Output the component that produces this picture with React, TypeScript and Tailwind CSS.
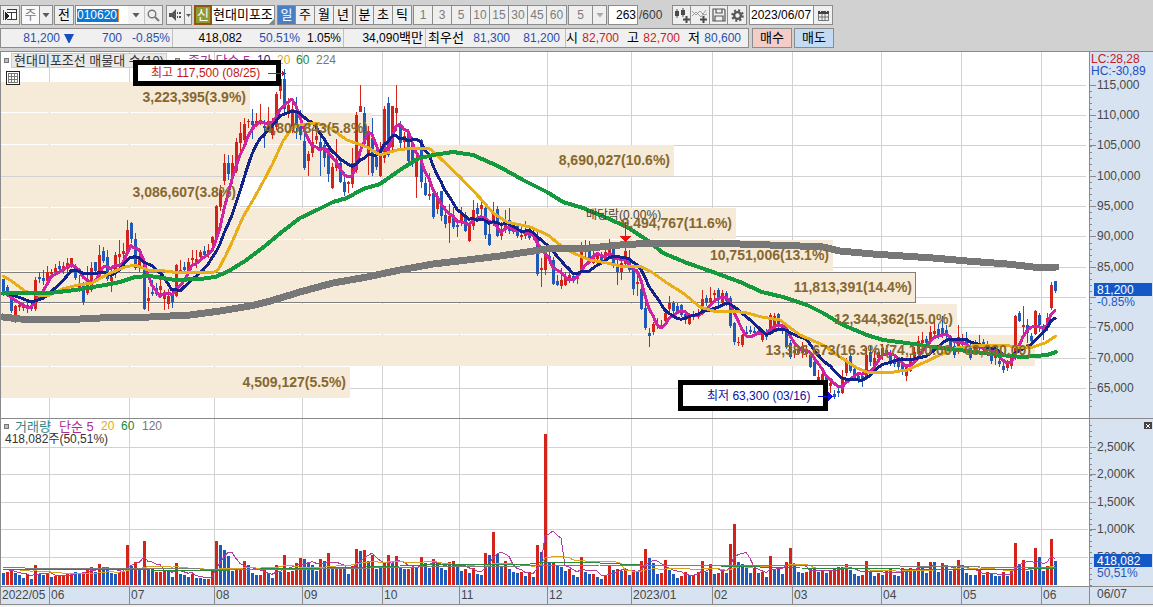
import type { ReactNode } from 'react'

type Point = [number, number]

interface Candle {
  up: boolean
  high: number
  top: number
  bottom: number
  low: number
}

const RED = '#d3231a'
const BLUE = '#1f5ab8'
const MAGENTA = '#cf23a4'
const NAVY = '#12248c'
const AMBER = '#e8ae1a'
const GREEN = '#149a3c'
const STEP = 4.0145

// One entry per session: direction, then high / body top / body bottom / low
const CANDLE_DATA = `
b279,279,295,296 b285,287,296,297 b296,297,311,313 r305,306,322,323 r304,305,307,311 r303,306,308,311 b302,305,309,313 b304,306,309,311
r277,280,309,311 b272,277,279,283 b270,278,281,285 r266,272,281,285 r269,272,274,279 r264,268,272,274 b261,266,269,273 r262,266,271,274
r258,263,269,274 r258,258,266,268 b264,267,278,280 r275,284,290,292 b282,284,302,305 r266,280,293,295 r262,268,290,292 b262,262,271,275
r245,255,271,273 b247,251,261,263 b250,257,279,281 r270,277,281,292 r252,255,272,278 r240,254,257,263 r243,251,254,260 r220,230,253,255
b222,223,239,243 b233,239,268,270 r253,259,266,272 b258,265,309,310 r287,298,301,311 b280,292,294,296 b283,288,294,296 r274,286,290,296
r290,295,299,310 r289,296,304,309 b292,295,302,308 r264,265,296,297 r260,270,272,274 b262,267,270,273 r258,262,272,276 r250,258,260,266
r250,259,262,268 r250,252,257,258 b246,251,255,257 r244,250,255,258 r236,237,243,250 r205,206,237,238 r185,190,207,211 r154,163,181,185
b155,163,174,180 r155,163,176,184 r138,142,171,173 r122,133,143,152 r118,124,140,145 r119,121,122,128 b109,121,125,139 r113,121,124,127
r104,120,123,125 b120,126,128,148 r107,121,129,132 r118,124,135,139 r92,94,127,130 r70,79,91,99 b69,79,109,113 r98,105,111,118
r100,109,130,133 b97,110,128,139 b110,126,135,140 b128,141,168,170 r151,154,161,176 r128,142,153,157 r122,136,140,144 b135,142,150,176
b138,145,158,167 b144,148,174,182 r163,167,188,189 r139,160,168,171 b160,163,182,183 b172,182,192,196 r181,182,184,193 r148,163,184,188
r112,115,170,173 r85,106,112,112 b107,113,144,148 r126,133,156,175 b118,138,173,176 b145,157,167,170 r142,152,176,177 r106,109,158,163
b97,103,155,157 r106,106,147,150 r85,108,113,131 b121,124,143,151 r132,136,142,151 b130,134,161,163 b137,142,161,167 r150,160,177,198
b139,140,182,188 b177,183,195,196 r173,194,196,200 b191,193,217,219 r192,196,209,214 b191,191,216,221 b206,215,224,228 r204,216,223,243
b207,215,227,229 b219,225,227,237 r207,214,222,226 b212,216,231,232 r224,224,241,242 r200,210,226,230 b203,208,214,218 r201,205,209,215
b202,208,235,239 b222,234,245,246 r202,212,222,226 b206,209,236,237 r222,233,236,240 r210,220,230,233 b208,220,231,234 b222,227,232,234
b225,226,236,238 r224,235,237,240 r221,230,236,239 b227,230,238,240 r228,235,237,240 b232,237,274,276 r258,268,270,287 r249,254,270,275
b250,256,259,264 b257,260,284,285 b275,281,285,286 r268,280,286,289 r272,276,285,286 r270,275,281,283 b273,276,281,283 r272,275,279,284
r242,249,272,273 b240,246,248,258 b241,250,258,263 r245,255,263,264 r253,256,259,264 b252,256,261,264 r248,252,262,263 r239,244,256,258
b244,246,265,268 b258,265,272,285 r261,263,272,280 r241,251,264,265 b250,258,270,272 b268,270,289,295 r269,282,284,296 b288,289,309,310
b302,308,328,330 b328,333,336,347 r322,324,332,335 b318,324,326,329 r320,325,327,329 r310,313,321,323 r296,303,309,313 b301,303,311,315
b303,306,311,313 b304,305,315,317 b310,314,320,324 r315,317,324,325 r311,315,317,320 r309,313,315,319 r290,299,314,315 b295,298,303,306
r287,298,302,304 r290,293,295,301 b288,290,300,305 r290,293,303,305 b291,293,301,306 b296,298,326,328 b322,323,342,345 r337,342,343,346
r334,335,345,347 b326,332,334,337 b326,330,332,334 b327,331,333,336 b328,331,333,335 r331,332,340,342 b329,332,337,340 r313,315,333,334
r313,316,330,331 b313,314,327,330 b321,324,331,334 b329,331,347,349 b340,343,357,359 r345,350,353,358 r345,349,353,355 r342,346,353,358
r345,350,354,357 b352,355,367,368 b357,362,376,376 r370,377,380,381 r371,374,380,391 b374,376,385,388 r381,383,386,393 b390,394,397,399
b386,391,393,397 r370,378,393,394 r358,361,373,376 b354,356,371,373 b366,369,378,381 b372,376,380,383 b372,376,381,387 r348,355,379,380
b345,352,362,366 r351,358,367,369 r349,352,358,363 r344,348,355,360 r345,350,353,356 b350,354,361,366 b355,359,364,367 b358,361,367,370
b360,363,372,375 r364,366,376,381 r355,358,371,372 r347,352,358,364 r336,341,354,357 r332,340,343,351 b336,339,343,346 r326,332,340,344
r318,331,334,338 b324,329,335,339 b316,328,336,338 b325,330,336,340 b335,337,347,350 b342,346,355,358 r325,337,352,354 r334,338,345,349
b332,338,346,350 b343,347,358,360 r340,346,351,354 r335,344,347,353 b339,342,349,352 b341,344,351,356 b350,353,361,364 r350,355,358,365
b358,361,364,367 b362,366,370,373 r360,364,368,371 r356,358,366,369 r315,316,356,360 b311,313,321,322 r306,325,327,334 b319,325,333,343
b333,336,341,344 r310,311,334,335 b313,315,325,332 b324,326,332,340 r313,318,328,331 r282,285,308,310 b281,281,291,293`

const VOLUME_DATA = `
b12 r13 r15 b12 b10 b7 r11 b6 r20 b11 b10 r12 b8 r9 r9 r10 r11 r12 b13 b12 r13 r16 r18 b13 r21 b18 b18 b12 b11 r13 r14 r40 b19 r23 b15 r44
b17 b16 r13 r13 r15 b15 b8 r22 b11 b10 b8 r11 b7 b7 b6 r6 r15 r44 b40 b35 b29 b14 r15 r15 r24 b20 b12 b10 r10 r16 b11 b7 r20 b13 r30 r13
r14 r22 r27 b26 b22 b20 b14 r26 b24 r32 b17 r16 r18 b18 b11 r19 r36 b34 r35 b24 r30 b16 b18 r22 r30 b22 r29 b17 b16 r16 r18 b18 r28 b22
b17 r26 b22 b17 b15 r23 r24 b20 b14 r16 b12 r17 b11 b10 r32 b30 r53 b31 b18 r24 b16 b13 b12 r13 b9 r13 b8 r40 b33 r151 b23 r23 b19 b18
b14 r16 b10 b8 r28 b13 b11 r11 b8 b6 r9 r20 b15 r16 b14 r16 b10 r15 b13 r24 r36 b27 b22 b11 r12 r25 b15 b11 b7 r9 r13 b10 r10 r13 r24
b13 r21 b11 r12 r14 b12 r41 r61 b23 b21 b17 b12 r17 b12 r13 b8 r29 b16 b16 b11 r23 r37 b19 b13 b12 r13 r16 r17 b13 r15 b12 r15 r16 r18
r18 r21 b15 b11 b9 r10 r24 b13 b9 r12 b10 r15 r16 b10 b9 r17 b16 r17 b14 r23 b19 b12 r23 b23 b13 r22 b19 b14 r17 r25 b20 b12 b10 b10
r15 b10 r13 b11 b9 b9 r13 b9 r14 r42 b21 r25 b14 b15 r37 b28 b14 r19 r46 b24`

const MA20: Point[] = [
  [3, 276], [10, 280], [25, 291], [38, 295], [50, 295], [62, 289], [78, 285], [92, 283], [108, 274], [125, 267],
  [135, 265], [148, 270], [165, 271], [180, 273], [200, 272], [212, 273], [218, 270], [225, 257], [233, 240],
  [243, 217], [253, 200], [263, 182], [273, 163], [283, 141], [292, 128], [300, 125], [317, 123], [330, 128],
  [347, 140], [367, 147], [380, 155], [397, 150], [413, 148], [430, 149], [440, 158], [460, 177], [480, 198],
  [493, 213], [507, 222], [530, 227], [548, 235], [560, 245], [573, 253], [590, 260], [607, 263], [620, 266],
  [640, 266], [653, 273], [667, 283], [683, 293], [700, 307], [717, 312], [733, 311], [747, 313], [762, 317],
  [780, 320], [800, 335], [823, 345], [840, 357], [857, 368], [867, 372], [887, 373], [907, 370], [923, 363],
  [940, 355], [957, 348], [980, 345], [1003, 345], [1023, 348], [1033, 347], [1045, 343], [1056, 336],
]
const MA60: Point[] = [
  [3, 293], [50, 293], [75, 290], [105, 285], [120, 282], [135, 277], [150, 276], [175, 280], [200, 279],
  [215, 277], [227, 272], [245, 261], [265, 246], [283, 231], [300, 218], [317, 210], [333, 202], [347, 198],
  [363, 189], [380, 184], [400, 170], [417, 159], [433, 155], [453, 152], [473, 155], [500, 167], [523, 180],
  [547, 192], [563, 202], [583, 208], [607, 218], [627, 227], [647, 240], [663, 253], [687, 263], [713, 272],
  [740, 282], [762, 292], [783, 297], [807, 305], [823, 313], [843, 325], [867, 335], [883, 340], [907, 343],
  [933, 347], [967, 351], [1000, 355], [1023, 357], [1047, 355], [1056, 352],
]
const MA224: Point[] = [
  [3, 317], [20, 319], [60, 320], [100, 318], [150, 317], [190, 315], [220, 311], [250, 306], [267, 302],
  [300, 292], [333, 283], [367, 277], [400, 270], [433, 264], [467, 260], [500, 256], [547, 249], [590, 248],
  [620, 245], [653, 243], [713, 243], [740, 244], [800, 246], [823, 247], [840, 251], [873, 254], [933, 258],
  [967, 261], [1007, 264], [1033, 267], [1056, 267],
]
const VOL_MA60: Point[] = [
  [3, 569], [120, 569], [150, 570], [200, 571], [260, 569], [330, 568], [400, 566], [440, 564], [530, 564],
  [548, 562], [600, 563], [640, 565], [720, 566], [800, 568], [900, 569], [1000, 570], [1056, 568],
]
const VOL_MA120: Point[] = [
  [3, 567], [25, 568], [100, 568], [200, 569], [320, 569], [420, 567], [520, 566], [600, 565], [700, 566],
  [800, 565], [900, 566], [980, 567], [1056, 568],
]

const BANDS = [
  { y: 82, h: 30, right: 250, label: '3,223,395(3.9%)' },
  { y: 113, h: 31, right: 372, label: '4,800,843(5.8%)' },
  { y: 145, h: 31, right: 674, label: '8,690,027(10.6%)' },
  { y: 177, h: 30, right: 240, label: '3,086,607(3.8%)' },
  { y: 208, h: 31, right: 736, label: '9,494,767(11.6%)' },
  { y: 240, h: 31, right: 833, label: '10,751,006(13.1%)' },
  { y: 272, h: 30, right: 916, label: '11,813,391(14.4%)', current: true },
  { y: 304, h: 30, right: 957, label: '12,344,362(15.0%)' },
  { y: 335, h: 31, right: 1035, label: '13,386,673(16.3%)(74,180.00 - 68,930.00)' },
  { y: 367, h: 31, right: 350, label: '4,509,127(5.5%)' },
]

const MONTHS = [
  { x: 49, label: '06' },
  { x: 129, label: '07' },
  { x: 214, label: '08' },
  { x: 302, label: '09' },
  { x: 382, label: '10' },
  { x: 459, label: '11' },
  { x: 547, label: '12' },
  { x: 631, label: '2023/01' },
  { x: 712, label: '02' },
  { x: 792, label: '03' },
  { x: 881, label: '04' },
  { x: 961, label: '05' },
  { x: 1041, label: '06' },
]

const PRICE_LEVELS = [
  { y: 85, label: '115,000' },
  { y: 115, label: '110,000' },
  { y: 145, label: '105,000' },
  { y: 176, label: '100,000' },
  { y: 206, label: '95,000' },
  { y: 236, label: '90,000' },
  { y: 267, label: '85,000' },
  { y: 297, label: '' },
  { y: 327, label: '75,000' },
  { y: 358, label: '70,000' },
  { y: 388, label: '65,000' },
]

const VOLUME_LEVELS = [
  { y: 447, label: '2,500K' },
  { y: 474, label: '2,000K' },
  { y: 502, label: '1,500K' },
  { y: 529, label: '1,000K' },
  { y: 557, label: '500,000' },
]

const candles: Candle[] = CANDLE_DATA.trim().split(/\s+/).map((entry) => {
  const [high, top, bottom, low] = entry.slice(1).split(',').map(Number)
  return { up: entry[0] === 'r', high, top, bottom, low }
})

const volumes = VOLUME_DATA.trim().split(/\s+/).map((entry) => ({
  up: entry[0] === 'r',
  height: Number(entry.slice(1)),
}))

const barX = (i: number) => Math.round(2 + i * STEP)

/** Simple moving average; `seed` stands in for the sessions before the first one shown. */
function movingAverage(values: number[], period: number, seed: number): Point[] {
  const padded = [...Array(period - 1).fill(seed), ...values]
  return values.map((_, i) => {
    const sum = padded.slice(i, i + period).reduce((a: number, b: number) => a + b, 0)
    return [barX(i) + 1, sum / period]
  })
}

const toPoints = (points: Point[]) => points.map(([x, y]) => `${x},${y}`).join(' ')

const closes = candles.map((c) => (c.up ? c.top : c.bottom))
const MA5 = movingAverage(closes, 5, 293)
const MA10 = movingAverage(closes, 10, 292)
const volumeTops = volumes.map((v) => 585 - v.height)
const VOL_MA5 = movingAverage(volumeTops, 5, 568)
const VOL_MA20 = movingAverage(volumeTops, 20, 569)

const FONT = "font-['Liberation_Sans','Noto_Sans_CJK_KR',sans-serif]"

function Line({ points, color, width }: { points: Point[]; color: string; width: number }) {
  return (
    <polyline
      points={toPoints(points)}
      fill="none"
      stroke={color}
      strokeWidth={width}
      strokeLinejoin="round"
      strokeLinecap="round"
    />
  )
}

function MonthGrid({ top, bottom }: { top: number; bottom: number }) {
  return (
    <>
      {MONTHS.map((m) => (
        <rect key={m.x} x={m.x} y={top} width={1} height={bottom - top} fill="#d2d2d2" />
      ))}
    </>
  )
}

function PriceChart() {
  return (
    <svg viewBox="1 52 1088 366" preserveAspectRatio="xMinYMin meet" className="block h-[366px] w-full" shapeRendering="crispEdges">
      <MonthGrid top={52} bottom={418} />
      {PRICE_LEVELS.map((l) => (
        <rect key={l.y} x={1} y={l.y} width={1085} height={1} fill="#d2d2d2" />
      ))}
      {BANDS.map((b) => (
        <rect key={b.y} x={1} y={b.y} width={b.right - 1} height={b.h} fill="#f6ead9" />
      ))}
      {/* Band that holds the current price */}
      {BANDS.filter((b) => b.current).map((b) => (
        <rect key={b.y} x={0.5} y={b.y + 0.5} width={b.right - 1} height={b.h} fill="none" stroke="#808080" />
      ))}

      {candles.map((c, i) => (
        <g key={i} fill={c.up ? RED : BLUE}>
          <rect x={barX(i) + 1} y={c.high} width={1} height={c.low - c.high} />
          <rect x={barX(i)} y={c.top} width={3} height={Math.max(c.bottom - c.top, 1)} />
        </g>
      ))}

      <Line points={MA5} color={MAGENTA} width={3} />
      <Line points={MA10} color={NAVY} width={3} />
      <Line points={MA20} color={AMBER} width={3} />
      <Line points={MA60} color={GREEN} width={4} />
      <Line points={MA224} color="#777777" width={7} />

      <g className="font-['Liberation_Sans',sans-serif] text-[14px] font-bold" fill="#86682f" textAnchor="end">
        {BANDS.map((b) => (
          <text key={b.y} x={b.right - 4} y={b.y + 20}>
            {b.label}
          </text>
        ))}
      </g>

      {/* Ex-dividend marker */}
      <text x={586} y={219} fill="#4a4436" className={`${FONT} text-[12px]`}>
        배당락(0.00%)
      </text>
      <rect x={625} y={222} width={1} height={15} fill="#a03020" />
      <polygon points="620,236 631,236 625.5,242" fill="#f01010" />
    </svg>
  )
}

function VolumeChart() {
  return (
    <svg viewBox="1 419 1088 167" preserveAspectRatio="xMinYMin meet" className="block h-[167px] w-full" shapeRendering="crispEdges">
      <MonthGrid top={419} bottom={586} />
      {VOLUME_LEVELS.map((l) => (
        <rect key={l.y} x={1} y={l.y} width={1087} height={1} fill="#d2d2d2" />
      ))}
      {volumes.map((v, i) => (
        <rect key={i} x={barX(i)} y={585 - v.height} width={3} height={v.height} fill={v.up ? RED : BLUE} />
      ))}
      <Line points={VOL_MA5} color="#b43ca0" width={1} />
      <Line points={VOL_MA20} color="#d8a420" width={1} />
      <Line points={VOL_MA60} color="#2c8a3c" width={1} />
      <Line points={VOL_MA120} color="#7c7c7c" width={1} />
    </svg>
  )
}

function Ticks({ from, to, step }: { from: number; to: number; step: number }) {
  const count = Math.floor((to - from) / step) + 1
  return (
    <>
      {Array.from({ length: count }, (_, i) => (
        <rect key={i} x={1090} y={Math.round(from + i * step)} width={2} height={1} fill="#8a8a8a" />
      ))}
    </>
  )
}

function PriceAxis() {
  return (
    <svg viewBox="1090 52 63 366" className={`block h-[366px] w-full text-[12px] ${FONT}`}>
      <Ticks from={91} to={412} step={6.06} />
      {PRICE_LEVELS.map((l) => (
        <g key={l.y}>
          <rect x={1090} y={l.y} width={6} height={1} fill="#8a8a8a" />
          <text x={1097} y={l.y + 4} fill="#484848">
            {l.label}
          </text>
        </g>
      ))}
      <text x={1091} y={63} fill="#c4201c">LC:28,28</text>
      <text x={1091} y={75} fill="#1a4fc0">HC:-30,89</text>
      <rect x={1094} y={283} width={58} height={13} fill="#1458c8" />
      <text x={1097} y={294} fill="#ffffff">81,200</text>
      <text x={1097} y={306} fill="#1d58c0">-0.85%</text>
    </svg>
  )
}

function VolumeAxis() {
  return (
    <svg viewBox="1090 419 63 167" className={`block h-[167px] w-full text-[12px] ${FONT}`}>
      <Ticks from={425} to={585} step={5.5} />
      {VOLUME_LEVELS.map((l) => (
        <g key={l.y}>
          <rect x={1090} y={l.y} width={6} height={1} fill="#8a8a8a" />
          <text x={1097} y={l.y + 4} fill="#484848">
            {l.label}
          </text>
        </g>
      ))}
      <rect x={1094} y={554} width={58} height={13} fill="#1458c8" />
      <text x={1097} y={565} fill="#ffffff">418,082</text>
      <text x={1097} y={577} fill="#1d58c0">50,51%</text>
    </svg>
  )
}

function TimeAxis() {
  return (
    <svg viewBox="1 587 1088 17" preserveAspectRatio="xMinYMin meet" className={`block h-[17px] w-full text-[12px] ${FONT}`}>
      <text x={2} y={599} fill="#484848">2022/05</text>
      {MONTHS.map((m) => (
        <g key={m.x}>
          <rect x={m.x} y={587} width={1} height={17} fill="#8a8a8a" />
          <text x={m.x + 2} y={599} fill="#484848">
            {m.label}
          </text>
        </g>
      ))}
    </svg>
  )
}

function ToolButton({ label, className, children }: { label?: string; className: string; children: ReactNode }) {
  return (
    <button
      type="button"
      aria-label={label}
      className={`flex h-full shrink-0 items-center justify-center whitespace-nowrap ${className}`}
    >
      {children}
    </button>
  )
}

function Arrow({ color = '#5a5a5a' }: { color?: string }) {
  return (
    <svg width="8" height="5" viewBox="0 0 8 5">
      <path d="M0.5 0h7L4 4.5z" fill={color} />
    </svg>
  )
}

function Group({ className = '', children }: { className?: string; children: ReactNode }) {
  return (
    <div className={`flex h-full shrink-0 divide-x divide-[#8c8c8c] border border-[#8c8c8c] bg-[#efefef] ${className}`}>
      {children}
    </div>
  )
}

function Toolbar() {
  return (
    <div className="flex h-5 items-center text-black">
      <Group className="mr-px w-5">
        <ToolButton label="패널" className="w-full">
          <svg width="15" height="14" viewBox="0 0 15 14" shapeRendering="crispEdges">
            <path d="M5 1h9v11H5z" fill="#fff" />
            <path d="M4 1h10v1H4zM4 11h10v1H4zM13 1h1v11h-1zM4 4h10v1H4zM8 4h1v8H8z" fill="#3a3a3a" />
            <path d="M0 2h1v10H0z" fill="#555" />
            <path d="M2 4l4 4-4 4z" fill="#222" />
          </svg>
        </ToolButton>
      </Group>
      <Group className="mr-px w-8">
        <ToolButton className="w-[18px] bg-[#fafafa] text-[#777]">주</ToolButton>
        <ToolButton label="주기 선택" className="flex-1">
          <Arrow />
        </ToolButton>
      </Group>
      <Group className="mr-px w-5">
        <ToolButton className="w-full">전</ToolButton>
      </Group>
      <div className="mr-[3px] flex h-full w-[88px] shrink-0 border border-[#8c8c8c] bg-white">
        <label className="flex items-center">
          <span className="sr-only">종목코드</span>
          <input
            defaultValue="010620"
            className="ml-px h-[13px] w-[42px] border-r border-[#f08a24] bg-[#0a78d6] text-[12px] leading-[13px] text-white outline-none"
          />
        </label>
        <ToolButton label="종목 목록" className="ml-auto w-4 bg-[#f3f3f3]">
          <Arrow />
        </ToolButton>
        <ToolButton label="검색" className="w-[18px] border-l border-[#c4c4c4] bg-[#efefef]">
          <svg width="13" height="13" viewBox="0 0 13 13" fill="none" stroke="#777">
            <circle cx="5" cy="5" r="3.8" strokeWidth="1.4" />
            <path d="M8 8l4 4" strokeWidth="2" />
          </svg>
        </ToolButton>
      </div>
      <Group className="mr-0.5 w-[26px]">
        <ToolButton label="소리" className="w-[18px]">
          <svg width="13" height="12" viewBox="0 0 13 12" fill="#555">
            <path d="M0 4h3l4-4v12L3 8H0z" />
            <path d="M8 3h1v2H8zM8 7h1v2H8zM10 3h2v2h-2zM10 7h2v2h-2z" />
          </svg>
        </ToolButton>
        <ToolButton label="소리 설정" className="flex-1">
          <svg width="5" height="3" viewBox="0 0 5 3">
            <path d="M0 0h5L2.5 3z" fill="#5a5a5a" />
          </svg>
        </ToolButton>
      </Group>
      <div className="mr-0.5 flex h-full w-[81px] shrink-0 border border-[#8c8c8c] bg-white">
        <div className="-my-px -ml-px flex w-[18px] shrink-0 items-center justify-center border-2 border-[#8f5314] bg-[#8f9a32] text-white">
          신
        </div>
        <span className="flex-1 pl-px leading-[18px] whitespace-nowrap">현대미포조</span>
        <svg width="5" height="5" viewBox="0 0 5 5" className="-ml-[5px] self-end">
          <path d="M5 0v5H0z" fill="#888" />
        </svg>
      </div>

      <Group className="mr-0.5">
        <ToolButton className="w-[18px] bg-[#4a7fc6] text-white">일</ToolButton>
        <ToolButton className="w-[19px]">주</ToolButton>
        <ToolButton className="w-[19px]">월</ToolButton>
        <ToolButton className="w-[18px]">년</ToolButton>
      </Group>
      <Group className="mr-px">
        <ToolButton className="w-[18px]">분</ToolButton>
        <ToolButton className="w-[19px]">초</ToolButton>
        <ToolButton className="w-[18px]">틱</ToolButton>
      </Group>
      <Group className="mr-px">
        {['1', '3', '5', '10', '15', '30', '45', '60'].map((minute) => (
          <ToolButton key={minute} className="w-[19px] text-[12px] text-[#7c7c7c]">
            {minute}
          </ToolButton>
        ))}
      </Group>
      <Group className="mr-px w-[39px]">
        <ToolButton className="w-6 text-[12px] text-[#7c7c7c]">5</ToolButton>
        <ToolButton label="분 선택" className="flex-1">
          <Arrow color="#aaaaaa" />
        </ToolButton>
      </Group>
      <label className="flex h-full shrink-0 items-center">
        <span className="sr-only">표시 봉 수</span>
        <input
          defaultValue="263"
          className="h-full w-[30px] border border-[#8c8c8c] bg-white pr-px text-right text-[12px] outline-none"
        />
      </label>
      <span className="w-[34px] shrink-0 pl-px text-[12px] text-[#3c3c3c]">/600</span>

      <Group className="mr-0.5">
        <ToolButton label="봉 추가" className="w-[18px]">
          <svg width="16" height="15" viewBox="0 0 16 15" fill="#4a4a4a">
            <path d="M1 3h4v5H1zM2.5 1h1v9h-1zM7 2h4v5H7zM8.5 0h1v9h-1z" />
            <path d="M11.5 8h2v2.500H16v2h-2.500V15h-2v-2.500H9v-2h2.500z" />
          </svg>
        </ToolButton>
        <ToolButton label="지표 추가" className="w-[19px]">
          <svg width="16" height="15" viewBox="0 0 16 15">
            <path d="M0 8l4-4 5 5 5-7M0 3l4 4 4-4 4 4 3-1" fill="none" stroke="#888" strokeWidth="0.8" />
            <path d="M10.5 8h2v2.500H15v2h-2.500V15h-2v-2.500H8v-2h2.500z" fill="#4a4a4a" />
          </svg>
        </ToolButton>
        <ToolButton label="저장" className="w-[18px]">
          <svg width="14" height="14" viewBox="0 0 14 14" fill="none" stroke="#555" strokeWidth="1.2">
            <path d="M1 1h11l1 1v11H1z" />
            <path d="M4 1v4h6V1M3 13V8h8v5" />
          </svg>
        </ToolButton>
        <ToolButton label="설정" className="w-[18px]">
          <svg width="13" height="13" viewBox="0 0 13 13" fill="none" stroke="#555">
            <circle cx="6.5" cy="6.5" r="3.4" strokeWidth="2.4" />
            <circle cx="6.5" cy="6.5" r="5.3" strokeWidth="2" strokeDasharray="2.08 2.08" />
          </svg>
        </ToolButton>
      </Group>
      <div className="flex h-full w-[84px] shrink-0 border border-[#8c8c8c] bg-white">
        <label className="flex flex-1 items-center">
          <span className="sr-only">기준일</span>
          <input defaultValue="2023/06/07" className="w-[63px] bg-white pl-px text-[12px] outline-none" />
        </label>
        <ToolButton label="달력" className="w-[19px] border-l border-[#8c8c8c] bg-[#efefef]">
          <svg width="11" height="11" viewBox="0 0 11 11">
            <path d="M0 1h11v3H0z" fill="#444" />
            <path d="M0.5 4v6.500h10V4M4 4v6M7 4v6M0 7h11" fill="none" stroke="#666" strokeWidth="0.9" />
            <path d="M2 0h1v2H2zM8 0h1v2H8z" fill="#ddd" />
          </svg>
        </ToolButton>
      </div>
    </div>
  )
}

function QuoteBar() {
  return (
    <div className="flex h-5 items-center text-[12px]">
      <div className="mr-[3px] flex h-full w-[749px] shrink-0 items-stretch divide-x divide-[#c0c0c0] border border-[#8c8c8c] bg-[#f1f0f1] leading-[18px] whitespace-nowrap text-black">
        <div className="flex w-[172px] items-center pr-0.5 text-[#1f4fae]">
          <span className="w-[59px] text-right">81,200</span>
          <svg width="10" height="9" viewBox="0 0 10 9" className="ml-1">
            <path d="M0 0h10L5.5 9h-1z" fill="#1450c4" />
          </svg>
          <span className="w-12 text-right">700</span>
          <span className="flex-1 text-right">-0.85%</span>
        </div>
        <div className="flex w-[171px] pr-0.5">
          <span className="w-[69px] text-right">418,082</span>
          <span className="w-[58px] text-right text-[#1f4fae]">50.51%</span>
          <span className="flex-1 text-right">1.05%</span>
        </div>
        <div className="w-[82px] pr-0.5 text-right">
          34,090<span className="text-[13px]">백만</span>
        </div>
        <div className="flex w-[140px] pl-0.5 text-[#1f4fae]">
          <span className="w-9 text-[13px] text-black">최우선</span>
          <span className="w-[46px] text-right">81,300</span>
          <span className="w-[50px] text-right">81,200</span>
        </div>
        <dl className="flex flex-1 text-[#c4241e]">
          <dt className="w-3 text-[13px] text-black">시</dt>
          <dd className="w-[41px] text-right">82,700</dd>
          <dt className="w-5 pl-2 text-[13px] text-black">고</dt>
          <dd className="w-[41px] text-right">82,700</dd>
          <dt className="w-5 pl-2 text-[13px] text-black">저</dt>
          <dd className="w-[41px] text-right text-[#1f4fae]">80,600</dd>
        </dl>
      </div>
      <button type="button" className="mr-0.5 h-full w-10 shrink-0 border border-[#8c8c8c] bg-[#f5cdc8] text-[13px] leading-[18px]">
        매수
      </button>
      <button type="button" className="h-full w-10 shrink-0 border border-[#8c8c8c] bg-[#c4dcf3] text-[13px] leading-[18px]">
        매도
      </button>
    </div>
  )
}

function Handle() {
  return <span className="size-[5px] shrink-0 border border-[#777] bg-[#bbb]" />
}

function PricePanel() {
  return (
    <div className="relative min-w-0 border-b border-[#8a8a8a] bg-white">
      <PriceChart />
      <div className="absolute top-px left-[3px] flex h-[15px] items-center text-[12px] leading-[15px] whitespace-nowrap">
        <Handle />
        <span className="mr-2 ml-0.5 w-[156px] border border-[#ccc] bg-[#e9e9e9] pl-0.5 text-[13px] leading-[13px] text-[#333]">
          현대미포조선 매물대 수(10)
        </span>
        <Handle />
        <span className="ml-2 w-[69px] text-[13px] text-[#b02a98]">종가 단순 5</span>
        <span className="w-5 text-[#12248c]">10</span>
        <span className="w-[19px] text-[#e0aa1c]">20</span>
        <span className="w-5 text-[#158a38]">60</span>
        <span className="text-[#777]">224</span>
      </div>
      <button
        type="button"
        aria-label="표 보기"
        className="absolute top-[19px] left-[5px] flex size-[14px] items-center justify-center border border-[#222] bg-white"
      >
        <svg width="10" height="10" viewBox="0 0 10 10" fill="none" stroke="#777" shapeRendering="crispEdges">
          <path d="M0.5 0.5h9v9h-9zM0 3.5h10M0 6.5h10M3.5 0v10M6.5 0v10" />
        </svg>
      </button>

      {/* Period high / low callouts */}
      <div className="absolute top-2 left-[132px] flex h-[26px] w-[148px] items-center border-5 border-black bg-white pl-[13px] text-[12px] whitespace-nowrap text-[#c01818]">
        최고 117,500 (08/25)
      </div>
      <svg width="18" height="5" viewBox="0 0 18 5" className="absolute top-[19px] left-[267px]" shapeRendering="crispEdges">
        <path d="M0 2h15v1H0zM14 0l4 2.500-4 2.500z" fill="#c01818" />
      </svg>
      <div className="absolute top-[328px] left-[677px] flex h-[31px] w-[150px] items-center border-5 border-black bg-white pl-6 text-[12px] whitespace-nowrap text-[#1010a0]">
        최저 63,300 (03/16)
      </div>
      <svg width="16" height="9" viewBox="0 0 16 9" className="absolute top-[340px] left-[817px]" shapeRendering="crispEdges">
        <path d="M0 4h10v1H0zM10 0l5 4.500-5 4.500z" fill="#0c0ce0" />
      </svg>
    </div>
  )
}

function VolumePanel() {
  return (
    <div className="relative min-w-0 border-b border-[#8a8a8a] bg-white">
      <VolumeChart />
      <div className="absolute top-px left-[3px] text-[12px] leading-[13px] whitespace-nowrap">
        <div className="flex items-center">
          <Handle />
          <span className="ml-1.5 w-11 text-[13px] text-[#2f8488]">거래량</span>
          <span className="w-[42px] text-[13px] text-[#b02a98]">단순 5</span>
          <span className="w-5 text-[#e0aa1c]">20</span>
          <span className="w-[21px] text-[#158a38]">60</span>
          <span className="text-[#777]">120</span>
        </div>
        <div className="pl-px text-[#333]">418,082주(50,51%)</div>
      </div>
    </div>
  )
}

export default function App() {
  return (
    <div className={`min-h-[607px] overflow-hidden bg-[#f4f4f4] text-[13px] ${FONT}`}>
      <header className="flex h-[52px] flex-col gap-[3px] border-b border-[#8a8a8a] bg-[#d1d1d1] pt-[5px]">
        <Toolbar />
        <QuoteBar />
      </header>
      <main className="grid grid-cols-[minmax(0,1fr)_64px] border-b border-l border-[#8a8a8a]">
        <PricePanel />
        <div className="border-b border-l border-[#8a8a8a] bg-[#d7e3f1]">
          <PriceAxis />
        </div>
        <VolumePanel />
        <div className="relative border-b border-l border-[#8a8a8a] bg-[#d7e3f1]">
          <VolumeAxis />
          <button
            type="button"
            aria-label="닫기"
            className="absolute top-[3px] right-px flex h-[7px] w-2 items-center justify-center bg-[#444]"
          >
            <svg width="4" height="4" viewBox="0 0 4 4" stroke="#fff">
              <path d="M0 0l4 4M4 0L0 4" />
            </svg>
          </button>
        </div>
        <div className="bg-[#d7e3f1]">
          <TimeAxis />
        </div>
        <div className="h-[17px] border-l border-[#8a8a8a] bg-[#d7e3f1] pl-[7px] text-[12px] leading-[15px] text-[#484848]">
          06/07
        </div>
      </main>
    </div>
  )
}
